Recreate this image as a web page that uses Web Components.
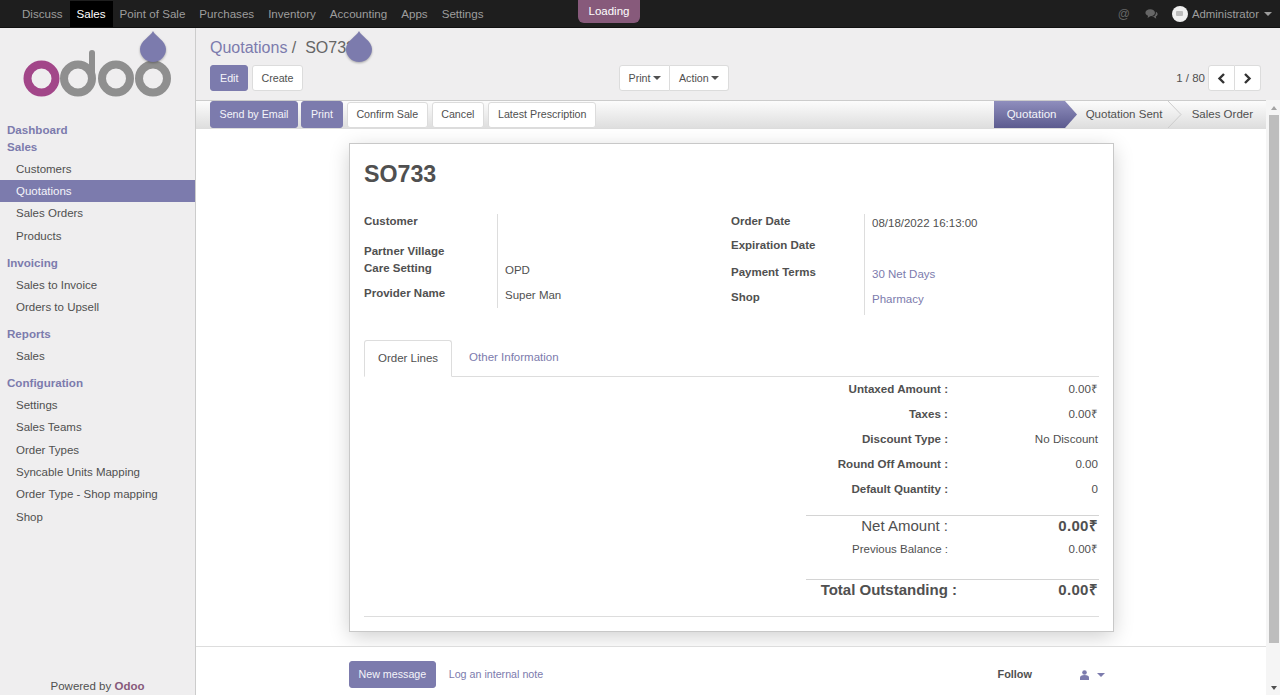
<!DOCTYPE html>
<html>
<head>
<meta charset="utf-8">
<title>Quotations</title>
<style>
  html, body { margin: 0; height: 100%; overflow: hidden; }
  body { font: 11.5px/18px "Liberation Sans", Arial, sans-serif; color: #505050; }
</style>
</head>
<body>
<odoo-app></odoo-app>
<script>
const PURPLE = '#7c7bad';

class OdooDrop extends HTMLElement {
  connectedCallback() {
    this.attachShadow({mode: 'open'}).innerHTML = `
      <style>
        :host { position: absolute; display: block; width: 26px; height: 31px; }
        svg { display: block; filter: drop-shadow(0 1px 1px rgba(0,0,0,.3)); }
      </style>
      <svg width="26" height="31" viewBox="0 0 26 31"><path d="M13 0C15 5 26 10 26 18a13 13 0 0 1-26 0C0 10 11 5 13 0Z" fill="#7c7bad"/></svg>
    `;
  }
}
customElements.define('odoo-drop', OdooDrop);

class OdooBtn extends HTMLElement {
  connectedCallback() {
    let primary = this.hasAttribute('primary');
    this.attachShadow({mode: 'open'}).innerHTML = `
      <style>
        :host {
          display: inline-flex;
          align-items: center;
          height: 26px;
          padding: 0 8.5px;
          box-sizing: border-box;
          font-size: 10.7px;
          border-radius: 3px;
          border: 1px solid ${primary ? '#7c7bad' : '#dcdcdc'};
          background: ${primary ? '#7c7bad' : '#fff'};
          color: ${primary ? '#f4f4fa' : '#505050'};
          white-space: nowrap;
        }
      </style>
      <slot></slot>
    `;
  }
}
customElements.define('odoo-btn', OdooBtn);

class OdooNavbar extends HTMLElement {
  connectedCallback() {
    let items = '';
    ['Discuss', 'Sales', 'Point of Sale', 'Purchases', 'Inventory', 'Accounting', 'Apps', 'Settings'].forEach(name => {
      items += `<a class="${name == 'Sales' ? 'on' : ''}">${name}</a>`;
    });
    this.attachShadow({mode: 'open'}).innerHTML = `
      <style>
        :host {
          display: flex;
          flex: none;
          height: 28px;
          box-sizing: border-box;
          padding: 1px 0 1px 15px;
          background: #1e1e1e;
          border-bottom: 1px solid #111;
          font-size: 11.6px;
          position: relative;
        }
        a { color: #9d9d9d; padding: 2px 7px 0; height: 24px; line-height: 22px; }
        a.on { background: #000; color: #fff; }
        .right { margin-left: auto; display: flex; align-items: center; color: #9d9d9d; padding-right: 8px; font-size: 11.4px; }
        .at { font-size: 12px; margin-right: 15px; color: #666; }
        .avatar { width: 16px; height: 16px; border-radius: 50%; background: #eee; margin-left: 14px; margin-right: 4px; display: flex; align-items: center; justify-content: center; }
        .avatar i { display: block; width: 7px; height: 5px; background: #bbb; border-radius: 1px; }
        .caret { border-top: 4px solid #9d9d9d; border-left: 4px solid transparent; border-right: 4px solid transparent; margin-left: 5px; }
        .loading {
          position: absolute;
          left: 578px;
          top: 0;
          width: 62px;
          height: 23px;
          background: #875a7b;
          color: #fff;
          text-align: center;
          line-height: 22px;
          border-radius: 0 0 6px 6px;
          font-size: 11.5px;
        }
      </style>
      ${items}
      <div class="loading">Loading</div>
      <div class="right">
        <span class="at">@</span>
        <svg width="13" height="12" viewBox="0 0 15 13"><path d="M6 1C9 1 11.500 2.700 11.500 5S9 9 6 9L3 11 3.500 8.500C1.800 7.800.5 6.500.5 5 .5 2.700 3 1 6 1Z" fill="#666"/><path d="M12.500 4C14 4.800 14.800 6 14.500 7.200 14.200 8.200 13.500 9 12.500 9.500L13 12 10 10H7.500C10.500 9.800 13 8 12.500 4Z" fill="#666"/></svg>
        <span class="avatar"><i></i></span>
        Administrator
        <span class="caret"></span>
      </div>
    `;
  }
}
customElements.define('odoo-navbar', OdooNavbar);

class OdooSidebar extends HTMLElement {
  connectedCallback() {
    this.attachShadow({mode: 'open'}).innerHTML = `
      <style>
        :host {
          display: flex;
          flex-direction: column;
          flex: none;
          width: 196px;
          box-sizing: border-box;
          border-right: 1px solid #ccc;
          background: #efeeef;
          position: relative;
          font-size: 11.5px;
        }
        .logo { height: 67px; padding: 0 0 0 23px; margin-top: 20px; flex: none; }
        .logo svg { display: block; }
        h4 { margin: 0; padding: 0 7px; font-size: 11.6px; line-height: 17px; color: ${PURPLE}; font-weight: bold; }
        a { display: block; padding: 0 16px; height: 22.4px; line-height: 22px; color: #505050; }
        a.on { background: ${PURPLE}; color: #f4f4fa; }
        .nav { margin-top: 5.5px; }
        .group { margin-top: 6.5px; margin-bottom: 3px; }
        .foot { margin-top: auto; text-align: center; height: 18px; line-height: 18px; }
        .foot b { color: #875a7b; }
        odoo-drop { left: 140px; top: 3px; }
      </style>
      <div class="logo">
        <svg width="150" height="50" viewBox="0 0 150 50">
          <circle cx="18.500" cy="30.500" r="14" fill="none" stroke="#a24689" stroke-width="8"/>
          <circle cx="55" cy="30.500" r="14" fill="none" stroke="#8f8f8f" stroke-width="8"/>
          <path d="M69 30V5" fill="none" stroke="#8f8f8f" stroke-width="6" stroke-linecap="round"/>
          <circle cx="93" cy="30.500" r="14" fill="none" stroke="#8f8f8f" stroke-width="8"/>
          <circle cx="130" cy="30.500" r="14" fill="none" stroke="#8f8f8f" stroke-width="8"/>
        </svg>
      </div>
      <odoo-drop></odoo-drop>
      <div class="nav">
        <h4>Dashboard</h4>
        <h4>Sales</h4>
        <div style="height:3px"></div>
        <a>Customers</a>
        <a class="on">Quotations</a>
        <a>Sales Orders</a>
        <a>Products</a>
        <h4 class="group">Invoicing</h4>
        <a>Sales to Invoice</a>
        <a>Orders to Upsell</a>
        <h4 class="group">Reports</h4>
        <a>Sales</a>
        <h4 class="group">Configuration</h4>
        <a>Settings</a>
        <a>Sales Teams</a>
        <a>Order Types</a>
        <a>Syncable Units Mapping</a>
        <a>Order Type - Shop mapping</a>
        <a>Shop</a>
      </div>
      <div class="foot">Powered by <b>Odoo</b></div>
    `;
  }
}
customElements.define('odoo-sidebar', OdooSidebar);

class OdooControlPanel extends HTMLElement {
  connectedCallback() {
    this.attachShadow({mode: 'open'}).innerHTML = `
      <style>
        :host {
          display: block;
          flex: none;
          height: 72px;
          box-sizing: border-box;
          padding: 10px 19px 0 14px;
          background: #efeeef;
          position: relative;
        }
        .crumbs { font-size: 16px; line-height: 20px; height: 27px; color: #666; }
        .crumbs a { color: ${PURPLE}; }
        .row { display: flex; align-items: center; position: relative; }
        .left { display: flex; gap: 4px; }
        .left odoo-btn:first-child { padding: 0 9px; }
        .left odoo-btn:last-child { padding: 0 8px; }
        .mid { position: absolute; left: 409px; display: flex; }
        .mid odoo-btn:first-child { border-radius: 3px 0 0 3px; }
        .mid odoo-btn:last-child { border-radius: 0 3px 3px 0; border-left: 0; }
        .caret { border-top: 4px solid #505050; border-left: 4px solid transparent; border-right: 4px solid transparent; margin-left: 2.500px; }
        .pager { margin-left: auto; display: flex; align-items: center; font-size: 11.500px; gap: 3px; }
        .pager odoo-btn { width: 26.500px; padding: 0; justify-content: center; }
        .pager odoo-btn:nth-child(2) { border-radius: 3px 0 0 3px; }
        .pager odoo-btn:nth-child(3) { border-radius: 0 3px 3px 0; border-left: 0; margin-left: -3px; }
        .pager svg { display: block; }
        odoo-drop { left: 150px; top: 3px; }
      </style>
      <div class="crumbs"><a>Quotations</a> /&nbsp; SO733</div>
      <odoo-drop></odoo-drop>
      <div class="row">
        <div class="left">
          <odoo-btn primary>Edit</odoo-btn>
          <odoo-btn>Create</odoo-btn>
        </div>
        <div class="mid">
          <odoo-btn>Print<span class="caret"></span></odoo-btn>
          <odoo-btn>Action<span class="caret"></span></odoo-btn>
        </div>
        <div class="pager">
          <span>1 / 80</span>
          <odoo-btn><svg width="9" height="11" viewBox="0 0 9 11"><path d="M7 1 2.500 5.500 7 10" fill="none" stroke="#333" stroke-width="2.400"/></svg></odoo-btn>
          <odoo-btn><svg width="9" height="11" viewBox="0 0 9 11"><path d="M2 1 6.500 5.500 2 10" fill="none" stroke="#333" stroke-width="2.400"/></svg></odoo-btn>
        </div>
      </div>
    `;
  }
}
customElements.define('odoo-control-panel', OdooControlPanel);

class OdooStatusbar extends HTMLElement {
  connectedCallback() {
    this.attachShadow({mode: 'open'}).innerHTML = `
      <style>
        :host {
          display: flex;
          align-items: center;
          flex: none;
          height: 29px;
          box-sizing: border-box;
          padding-left: 14px;
          border-top: 1px solid #ccc;
          border-bottom: 1px solid #ddd;
          background: linear-gradient(#fcfcfc, #dedede);
        }
        .btns { display: flex; align-items: center; gap: 4px; }
        .btns odoo-btn { height: 26px; padding-bottom: 1px; }
        .btns odoo-btn[primary] { height: 27px; padding-bottom: 1px; }
        .btns odoo-btn:first-child { margin-right: -1px; }
        .btns odoo-btn:nth-child(2) { padding-left: 9px; padding-right: 9px; }
        .btns odoo-btn:last-child { padding-left: 9px; padding-right: 9px; }
        .steps { margin-left: auto; display: flex; height: 27px; font-size: 11.500px; }
        .step { display: flex; align-items: center; box-sizing: border-box; color: #505050; padding-bottom: 1px; }
        .step.on { background: linear-gradient(#8f8ebd, #5c5b8f); color: #f4f4fa; padding-left: 13px; width: 71px; }
        .arrow { display: block; flex: none; }
      </style>
      <div class="btns">
        <odoo-btn primary>Send by Email</odoo-btn>
        <odoo-btn primary>Print</odoo-btn>
        <odoo-btn>Confirm Sale</odoo-btn>
        <odoo-btn>Cancel</odoo-btn>
        <odoo-btn>Latest Prescription</odoo-btn>
      </div>
      <div class="steps">
        <div class="step on">Quotation</div>
        <svg class="arrow" width="12" height="27" viewBox="0 0 12 27"><defs><linearGradient id="g" x1="0" y1="0" x2="0" y2="1"><stop offset="0" stop-color="#8f8ebd"/><stop offset="1" stop-color="#5c5b8f"/></linearGradient></defs><path d="M0 0 12 13.500 0 27Z" fill="url(#g)"/></svg>
        <div class="step" style="padding-left:9px;width:91px">Quotation Sent</div>
        <svg class="arrow" width="14" height="27" viewBox="0 0 14 27"><path d="M0 0 13 13.500 0 27" fill="none" stroke="#ccc"/></svg>
        <div class="step" style="padding-left:10px;padding-right:13px">Sales Order</div>
      </div>
    `;
  }
}
customElements.define('odoo-statusbar', OdooStatusbar);

class OdooField extends HTMLElement {
  connectedCallback() {
    this.attachShadow({mode: 'open'}).innerHTML = `
      <style>
        :host { display: grid; grid-template-columns: var(--label-w) 1fr; font-size: 11.500px; min-height: var(--h, 25px); }
        .label { font-weight: bold; line-height: 15px; }
        .value { border-left: 1px solid #ddd; padding: var(--vp, 4px) 0 0 7px; line-height: 15px; }
        .value.link { color: ${PURPLE}; }
      </style>
      <div class="label">${this.getAttribute('label')}</div>
      <div class="value ${this.hasAttribute('link') ? 'link' : ''}"><slot></slot></div>
    `;
  }
}
customElements.define('odoo-field', OdooField);

class OdooTotal extends HTMLElement {
  connectedCallback() {
    this.attachShadow({mode: 'open'}).innerHTML = `
      <style>
        :host { display: grid; grid-template-columns: 142px 1fr; font-size: 11.600px; height: 24.900px; line-height: 15px; }
        .l { text-align: right; font-weight: bold; }
        .v { text-align: right; padding-right: 1px; }
      </style>
      <div class="l">${this.getAttribute('label')}</div>
      <div class="v"><slot></slot></div>
    `;
  }
}
customElements.define('odoo-total', OdooTotal);

class OdooSheet extends HTMLElement {
  connectedCallback() {
    this.attachShadow({mode: 'open'}).innerHTML = `
      <style>
        :host {
          display: block;
          width: 765px;
          height: 489px;
          box-sizing: border-box;
          margin: 14px 0 14px 153px;
          padding: 15px 14px 0;
          background: #fff;
          border: 1px solid #c8c8c8;
          box-shadow: 0 5px 20px -1px rgba(0,0,0,.2);
          flex: none;
        }
        h1 { margin: 0; font-size: 23.200px; line-height: 30px; font-weight: bold; }
        .group { display: grid; grid-template-columns: 367px 1fr; margin-top: 25px; height: 102px; --label-w: 133px; }
        .fields { display: flex; flex-direction: column; }
        .tabs { display: flex; align-items: flex-end; margin-top: 23px; height: 37px; border-bottom: 1px solid #ddd; font-size: 11.500px; }
        .tab { padding: 0 13px; height: 36px; border: 1px solid transparent; border-radius: 3px 3px 0 0; box-sizing: border-box; }
        .tab.on { border-color: #ddd; border-bottom-color: #fff; height: 37px; margin-bottom: -1px; line-height: 34px; }
        .tab.off { color: ${PURPLE}; padding: 0 16px; line-height: 33px; }
        .totals { margin-left: 442px; padding-top: 4px; height: 138px; box-sizing: border-box; }
        .big { display: grid; font-size: 15px; line-height: 20px; height: 27px; box-sizing: border-box; border-top: 1px solid #d4d4d4; grid-template-columns: 142px 1fr; }
        .big .l { text-align: right; }
        .big .v { text-align: right; font-weight: bold; padding-right: 1px; letter-spacing: .3px; }
        .small { display: grid; grid-template-columns: 142px 1fr; font-size: 11.500px; line-height: 15px; height: 37px; }
        .small .l { text-align: right; } .small .v { text-align: right; padding-right: 1px; }
        .total { display: grid; grid-template-columns: 151px 1fr; font-size: 15px; font-weight: bold; height: 37px; border-top: 1px solid #d4d4d4; line-height: 20px; box-sizing: border-box; }
        .total .l { text-align: right; } .total .v { text-align: right; padding-right: 1px; letter-spacing: .3px; }
        .end { border-top: 1px solid #ddd; }
      </style>
      <h1>SO733</h1>
      <div class="group">
        <div class="fields">
          <odoo-field label="Customer" style="--h:30px;--vp:0"></odoo-field>
          <odoo-field label="Partner Village" style="--h:17px;--vp:0"></odoo-field>
          <odoo-field label="Care Setting" style="--h:25px;--vp:2px">OPD</odoo-field>
          <odoo-field label="Provider Name" style="--h:22px;--vp:2px">Super Man</odoo-field>
        </div>
        <div class="fields">
          <odoo-field label="Order Date" style="--h:24px;--vp:2px">08/18/2022 16:13:00</odoo-field>
          <odoo-field label="Expiration Date" style="--h:27px;--vp:0"></odoo-field>
          <odoo-field label="Payment Terms" link style="--h:25px;--vp:2px">30 Net Days</odoo-field>
          <odoo-field label="Shop" link style="--h:25px;--vp:2px">Pharmacy</odoo-field>
        </div>
      </div>
      <div class="tabs">
        <div class="tab on">Order Lines</div>
        <div class="tab off">Other Information</div>
      </div>
      <div class="totals">
        <odoo-total label="Untaxed Amount :">0.00₹</odoo-total>
        <odoo-total label="Taxes :">0.00₹</odoo-total>
        <odoo-total label="Discount Type :">No Discount</odoo-total>
        <odoo-total label="Round Off Amount :">0.00</odoo-total>
        <odoo-total label="Default Quantity :">0</odoo-total>
      </div>
      <div style="margin-left:442px">
        <div class="big"><div class="l">Net Amount :</div><div class="v">0.00₹</div></div>
        <div class="small"><div class="l">Previous Balance :</div><div class="v">0.00₹</div></div>
        <div class="total"><div class="l">Total Outstanding :</div><div class="v">0.00₹</div></div>
      </div>
      <div class="end"></div>
    `;
  }
}
customElements.define('odoo-sheet', OdooSheet);

class OdooChatter extends HTMLElement {
  connectedCallback() {
    this.attachShadow({mode: 'open'}).innerHTML = `
      <style>
        :host {
          display: flex;
          align-items: flex-start;
          flex: 1;
          border-top: 1px solid #ddd;
          padding: 14px 161px 0 153px;
          background: #fff;
        }
        odoo-btn { height: 27px; padding-bottom: 1px; }
        .log { color: ${PURPLE}; margin-left: 13px; line-height: 26px; font-size: 10.700px; }
        .follow { margin-left: auto; font-weight: bold; line-height: 27px; font-size: 10.900px; }
        .who { margin-left: 48px; display: flex; align-items: center; height: 27px; gap: 8px; }
        .who svg { display: block; }
        .caret { border-top: 4px solid ${PURPLE}; border-left: 4px solid transparent; border-right: 4px solid transparent; }
      </style>
      <odoo-btn primary>New message</odoo-btn>
      <span class="log">Log an internal note</span>
      <span class="follow">Follow</span>
      <span class="who">
        <svg width="9" height="10" viewBox="0 0 9 10"><circle cx="4.500" cy="2.500" r="2.300" fill="${PURPLE}"/><path d="M0 10V7.500C0 6 1.500 5 4.500 5S9 6 9 7.500V10Z" fill="${PURPLE}"/></svg>
        <span class="caret"></span>
      </span>
    `;
  }
}
customElements.define('odoo-chatter', OdooChatter);

class OdooScrollbar extends HTMLElement {
  connectedCallback() {
    this.attachShadow({mode: 'open'}).innerHTML = `
      <style>
        :host { display: flex; flex-direction: column; flex: none; width: 14px; box-sizing: border-box; background: #f5f5f5; align-items: center; padding-left: 1px; }
        .up { border-bottom: 4px solid #a3a3a3; border-left: 3.500px solid transparent; border-right: 3.500px solid transparent; margin-top: 6px; }
        .thumb { width: 10px; height: 528px; background: #bdbdbd; margin-top: 5px; }
        .down { border-top: 4px solid #505050; border-left: 3.500px solid transparent; border-right: 3.500px solid transparent; margin-top: auto; margin-bottom: 5px; }
      </style>
      <div class="up"></div>
      <div class="thumb"></div>
      <div class="down"></div>
    `;
  }
}
customElements.define('odoo-scrollbar', OdooScrollbar);

class OdooApp extends HTMLElement {
  connectedCallback() {
    this.attachShadow({mode: 'open'}).innerHTML = `
      <style>
        :host { display: flex; flex-direction: column; height: 695px; overflow: hidden; }
        .body { display: flex; flex: 1; min-height: 0; }
        .main { display: flex; flex-direction: column; flex: 1; min-width: 0; }
        .scroll { display: flex; flex: 1; min-height: 0; }
        .content { display: flex; flex-direction: column; flex: 1; min-width: 0; background: #fff; }
      </style>
      <odoo-navbar></odoo-navbar>
      <div class="body">
        <odoo-sidebar></odoo-sidebar>
        <div class="main">
          <odoo-control-panel></odoo-control-panel>
          <div class="scroll">
            <div class="content">
              <odoo-statusbar></odoo-statusbar>
              <odoo-sheet></odoo-sheet>
              <odoo-chatter></odoo-chatter>
            </div>
            <odoo-scrollbar></odoo-scrollbar>
          </div>
        </div>
      </div>
    `;
  }
}
customElements.define('odoo-app', OdooApp);
</script>
</body>
</html>
